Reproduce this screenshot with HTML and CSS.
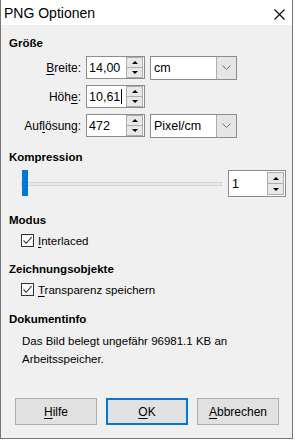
FILE: index.html
```html
<!DOCTYPE html>
<html lang="de">

<head>
  <meta charset="UTF-8">
  <meta name="viewport" content="width=device-width, initial-scale=1.0">
  <title>PNG Optionen</title>
  <link rel="stylesheet" href="styles.css">
</head>

<body>
  <div class="window">
    <div class="titlebar">
      <span class="title">PNG Optionen</span>
      <svg class="close" width="11" height="11" viewBox="0 0 11 11">
        <path d="M0.5 0.5 L10.5 10.5 M10.5 0.5 L0.5 10.5" stroke="#000" stroke-width="1.1" fill="none" />
      </svg>
    </div>

    <div class="content">
      <div class="section-title title-size">Größe</div>
      <div class="size-grid">
        <div class="field-label"><u>B</u>reite:</div>
        <div class="spin">
          <span class="spin-value">14,00</span>
          <div class="spin-btns">
            <span class="spin-btn up"></span>
            <span class="spin-btn down"></span>
          </div>
        </div>
        <div class="select">
          <span class="select-value">cm</span>
          <span class="select-arrow">
            <svg width="9" height="5" viewBox="0 0 9 5">
              <path d="M0.5 0.5 L4.5 4.5 L8.5 0.5" stroke="#707070" fill="none" />
            </svg>
          </span>
        </div>

        <div class="field-label">Höh<u>e</u>:</div>
        <div class="spin">
          <span class="spin-value">10,61<span class="caret"></span></span>
          <div class="spin-btns">
            <span class="spin-btn up"></span>
            <span class="spin-btn down"></span>
          </div>
        </div>
        <div></div>

        <div class="field-label">Auf<u>l</u>ösung:</div>
        <div class="spin">
          <span class="spin-value">472</span>
          <div class="spin-btns">
            <span class="spin-btn up"></span>
            <span class="spin-btn down"></span>
          </div>
        </div>
        <div class="select">
          <span class="select-value">Pixel/cm</span>
          <span class="select-arrow">
            <svg width="9" height="5" viewBox="0 0 9 5">
              <path d="M0.5 0.5 L4.5 4.5 L8.5 0.5" stroke="#707070" fill="none" />
            </svg>
          </span>
        </div>
      </div>

      <div class="section-title title-comp">Kompression</div>
      <div class="comp-row">
        <div class="slider">
          <div class="slider-track"></div>
          <div class="slider-thumb"></div>
        </div>
        <div class="spin spin-big">
          <span class="spin-value">1</span>
          <div class="spin-btns">
            <span class="spin-btn up"></span>
            <span class="spin-btn down"></span>
          </div>
        </div>
      </div>

      <div class="section-title title-mode">Modus</div>
      <div class="check-row">
        <span class="checkbox">
          <svg width="11" height="11" viewBox="0 0 11 11">
            <path d="M1.5 5.5 L4.2 8.3 L9.6 2.2" stroke="#333" stroke-width="1.1" fill="none" />
          </svg>
        </span>
        <span><u>I</u>nterlaced</span>
      </div>

      <div class="section-title title-draw">Zeichnungsobjekte</div>
      <div class="check-row">
        <span class="checkbox">
          <svg width="11" height="11" viewBox="0 0 11 11">
            <path d="M1.5 5.5 L4.2 8.3 L9.6 2.2" stroke="#333" stroke-width="1.1" fill="none" />
          </svg>
        </span>
        <span><u>T</u>ransparenz speichern</span>
      </div>

      <div class="section-title title-info">Dokumentinfo</div>
      <p class="info-text">Das Bild belegt ungefähr 96981.1 KB an<br>Arbeitsspeicher.</p>
    </div>

    <div class="buttons">
      <div class="btn"><u>H</u>ilfe</div>
      <div class="btn btn-default"><u>O</u>K</div>
      <div class="btn"><u>A</u>bbrechen</div>
    </div>
  </div>
</body>

</html>
```

FILE: styles.css
```css
* {
  margin: 0;
  padding: 0;
  box-sizing: border-box;
}

body {
  background-color: #fff;
  font-family: "Liberation Sans", Arial, sans-serif;
  font-size: 11.5px;
  line-height: 14px;
  color: #000;
}

u {
  text-decoration-thickness: 1px;
  text-underline-offset: 2px;
}

.window {
  width: 293px;
  height: 439px;
  border: 1px solid #767676;
  border-top: none;
  background-color: #f0f0f0;
  display: flex;
  flex-direction: column;
}

.titlebar {
  height: 25px;
  background-color: #fff;
  display: flex;
  justify-content: space-between;
  align-items: flex-start;
  padding: 6px 7px 0 3px;
}

.title {
  font-size: 14px;
  line-height: 15px;
}

.close {
  margin-top: 3px;
}

.content {
  padding-left: 8px;
}

.section-title {
  font-weight: bold;
}

.title-size {
  margin-top: 11px;
}

.title-comp {
  margin-top: 13px;
}

.title-mode {
  margin-top: 16px;
}

.title-draw {
  margin-top: 14px;
}

.title-info {
  margin-top: 15px;
}

/* Größe */
.size-grid {
  margin-top: 6px;
  display: grid;
  grid-template-columns: 72px 59px 87px;
  grid-auto-rows: 23px;
  column-gap: 5px;
  row-gap: 6px;
  align-items: center;
  font-size: 12px;
}

.field-label {
  text-align: right;
}

.spin {
  height: 23px;
  background-color: #fff;
  border: 1px solid #8c8c8c;
  display: flex;
  align-items: stretch;
  padding: 0 1px 0 2px;
}

.spin-value {
  flex: 1;
  display: flex;
  align-items: center;
  font-size: 12.5px;
}

.caret {
  display: inline-block;
  width: 1px;
  height: 15px;
  margin-left: 1px;
  background-color: #000;
}

.spin-btns {
  width: 17px;
  display: flex;
  flex-direction: column;
  border: 1px solid #adadad;
}

.spin-btn {
  flex: 1;
  background-color: #e8e8e8;
  display: flex;
  align-items: center;
  justify-content: center;
}

.spin-btn.down {
  border-top: 1px solid #adadad;
}

.spin-btn.up::before {
  content: "";
  border-left: 3px solid transparent;
  border-right: 3px solid transparent;
  border-bottom: 3px solid #000;
}

.spin-btn.down::before {
  content: "";
  border-left: 3px solid transparent;
  border-right: 3px solid transparent;
  border-top: 3px solid #000;
}

.select {
  height: 24px;
  background-color: #fff;
  border: 1px solid #8c8c8c;
  display: flex;
}

.select-value {
  flex: 1;
  display: flex;
  align-items: center;
  padding-left: 3px;
  font-size: 12.5px;
}

.select-arrow {
  width: 20px;
  background-color: #e5e5e5;
  border-left: 1px solid #adadad;
  display: flex;
  align-items: center;
  justify-content: center;
}

/* Kompression */
.comp-row {
  margin-top: 6px;
  display: flex;
  align-items: center;
}

.slider {
  width: 201px;
  height: 27px;
  margin-left: 12px;
  position: relative;
}

.slider-track {
  margin-top: 12px;
  height: 4px;
  background-color: #e7eaea;
  border: 1px solid #d6d6d6;
}

.slider-thumb {
  position: absolute;
  left: 1px;
  top: 0;
  width: 6px;
  height: 26px;
  background-color: #0078d7;
}

.spin-big {
  width: 58px;
  height: 27px;
  margin-left: 6px;
  padding-left: 3px;
}

.spin-big .spin-btns {
  margin: 1px 0;
}

/* Checkboxen */
.check-row {
  margin-top: 7px;
  margin-left: 12px;
  display: flex;
  align-items: flex-start;
  gap: 4px;
  font-size: 11.5px;
}

.checkbox {
  width: 13px;
  height: 13px;
  border: 1px solid #333;
  background-color: #fff;
  display: flex;
}

/* Dokumentinfo */
.info-text {
  margin-top: 6px;
  margin-left: 13px;
  line-height: 18px;
}

/* Buttons */
.buttons {
  margin-top: auto;
  padding: 0 0 13px 14px;
  display: flex;
  gap: 9px;
  font-size: 12px;
}

.btn {
  width: 82px;
  height: 27px;
  background-color: #e1e1e1;
  border: 1px solid #adadad;
  display: flex;
  align-items: center;
  justify-content: center;
}

.btn-default {
  border: 2px solid #0078d7;
}
```
